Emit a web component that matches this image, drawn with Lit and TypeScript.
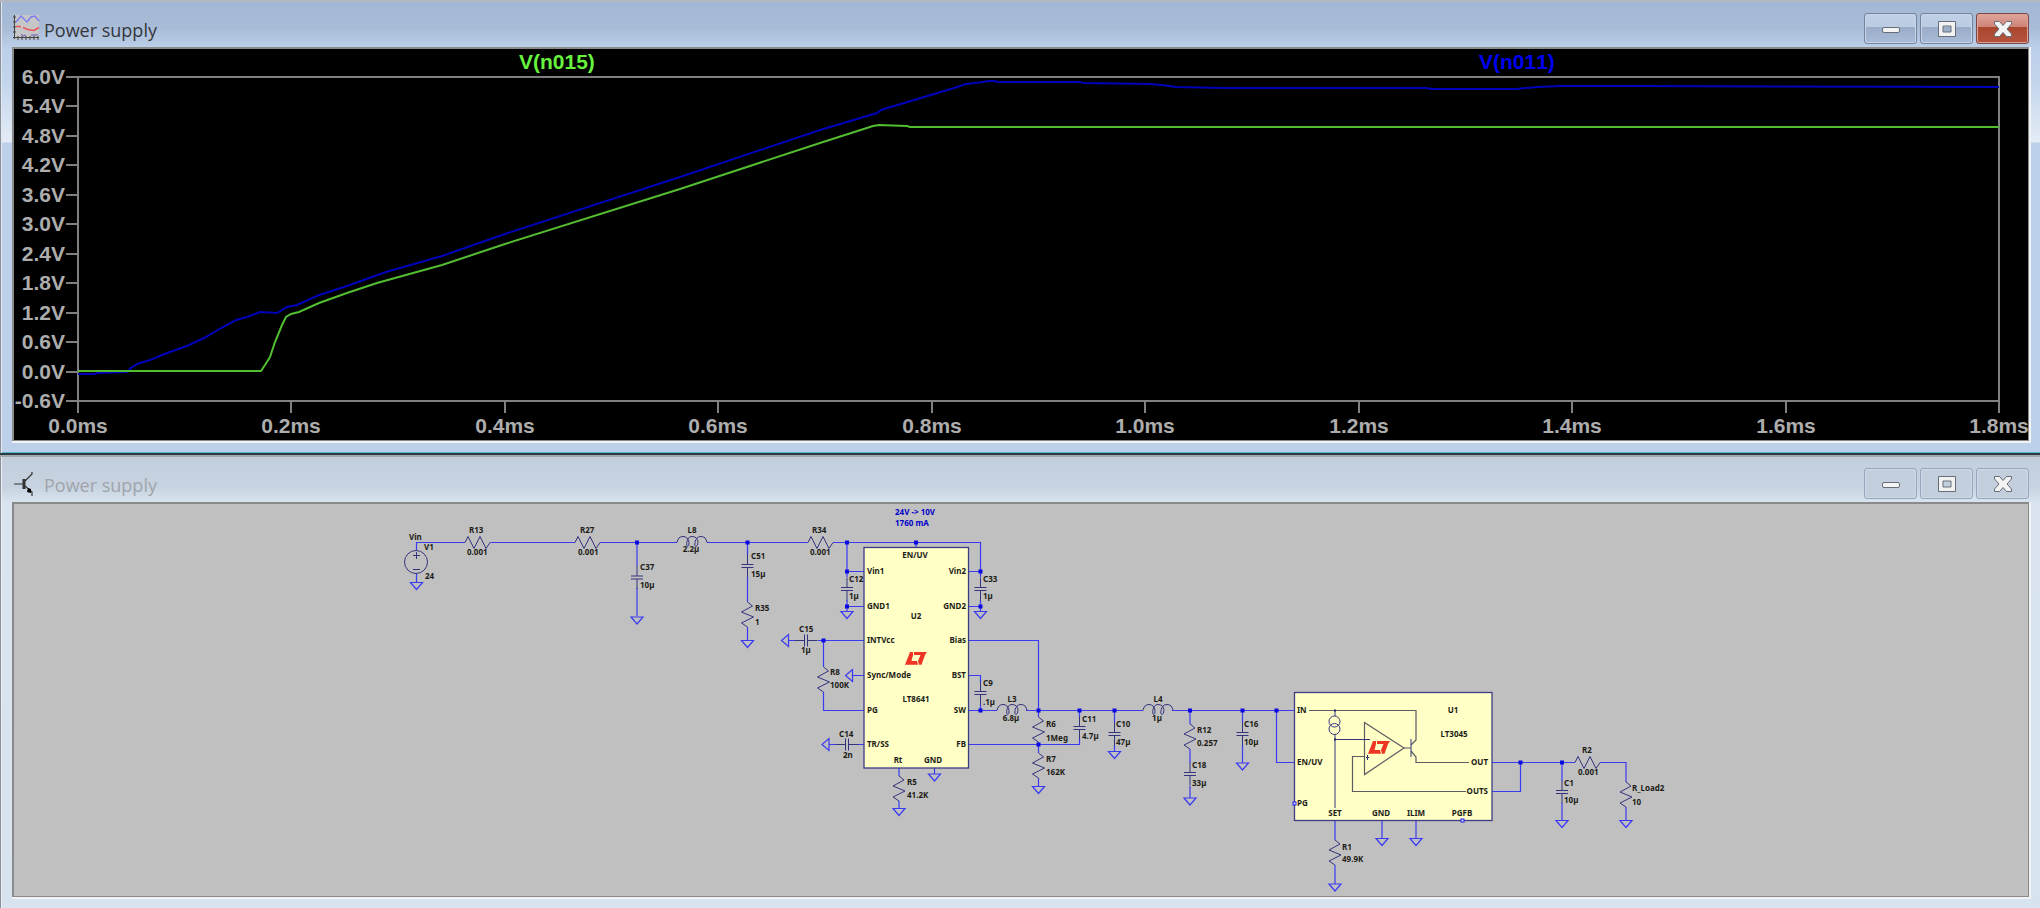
import { LitElement, html, svg, css } from "lit";
import { customElement, property } from "lit/decorators.js";

type Point = [number, number];

/* ---------- Window frame with caption buttons ---------- */

@customElement("tool-window")
export class ToolWindow extends LitElement {
  @property() caption = "";
  @property() icon = "plot";
  @property({ type: Boolean, reflect: true }) active = false;

  static styles = css`
    :host {
      display: flex;
      flex-direction: column;
      box-sizing: border-box;
      padding: 0 9px 10px 12px;
      border-top: 2px solid #a5a8ac;
      background: linear-gradient(#c3cedc 0, #c7d3e0 30px, #d9e4f0 46px, #d8e3f0 100%);
      box-shadow: inset 1px 0 #8b9097, inset 2px 0 #e9eff6;
    }
    :host([active]) {
      border-top-color: #b4b9bf;
      border-bottom: 2px solid #2a3c40;
      background: linear-gradient(#a3b8d4 0, #a8bcd8 26px, #bccfe9 45px, #c3d5ec 80px, #e4ecf6 140px, #bdd0e9 141px, #bdd0e9 100%);
      box-shadow: inset 1px 0 #8b9097, inset 2px 0 #dfe9f5, inset 0 -1px #4fb4cc;
    }
    .bar {
      display: flex;
      align-items: flex-start;
      height: 45px;
      padding-right: 2px;
    }
    .icon {
      display: block;
      margin-top: 12px;
      width: 28px;
      height: 28px;
      flex: none;
    }
    .caption {
      flex: 1;
      margin: 0;
      padding: 14px 0 0 4px;
      font: 400 18px/28px "Open Sans", "Noto Sans", sans-serif;
      color: #a0a4aa;
    }
    :host([active]) .caption {
      color: #35373b;
    }
    .buttons {
      display: flex;
      gap: 3px;
      padding-top: 11px;
    }
    button {
      display: grid;
      place-items: center;
      width: 53px;
      height: 31px;
      padding: 0;
      border: 1px solid #97a6be;
      border-radius: 3px;
      background: #c4cfde;
      box-shadow: inset 0 0 0 1px #cfd9e6;
    }
    :host([active]) button {
      border-color: #76849c;
      background: linear-gradient(#c0d0e6, #bccce2 44%, #9aacc7 45%, #a9bcd8);
      box-shadow: inset 0 0 0 1px #c6d5e9;
    }
    :host([active]) .close {
      border-color: #7d4846;
      background: linear-gradient(#dfa59c, #cf8477 44%, #aa4630 45%, #b4533c);
      box-shadow: inset 0 0 0 1px #dba398;
    }
    .frame {
      border: solid #f1f2f3;
      border-width: 0 2px 2px 0;
    }
    .client {
      border: solid #8a8a8a;
      border-width: 2px 1px 1px 2px;
    }
  `;

  private renderIcon() {
    return this.icon === "plot"
      ? html`<svg class="icon" viewBox="0 0 28 28" aria-hidden="true">
          <rect x="3" y="1" width="24" height="24" fill="#c6c6c9" />
          <path d="M2.500 1v24M1 3h3M1 8h3M1 13h3M1 18h3M1 23.500h26M6 22v4M10 22v4M14 22v4M18 22v4M22 22v4M26 22v4" stroke="#444" fill="none" />
          <path d="M4 8l5-6 6 6 4-5 4-1 4 5" stroke="#7d7df0" fill="none" stroke-width="1.500" />
          <path d="M4 12.500h5M11 13.500l5 2 6 1 5-3" stroke="#ef5353" fill="none" stroke-width="1.500" />
          <path d="M9 20l2 2 3-1M19 21h7" stroke="#5a5ab4" fill="none" />
        </svg>`
      : html`<svg class="icon" viewBox="0 0 28 28" aria-hidden="true">
          <path d="M2 15h9M13 12l4-4 3-3V3M13 17l7 6v4" stroke="#333" fill="none" stroke-width="1.200" />
          <path d="M12 10v10" stroke="#333" stroke-width="3" />
          <path d="M15 23l4 1v-4l-3-1z" fill="#000" />
        </svg>`;
  }

  render() {
    return html`
      <header class="bar">
        ${this.renderIcon()}
        <h2 class="caption">${this.caption}</h2>
        <div class="buttons">
          <button aria-label="Minimize">
            <svg width="20" height="18" viewBox="0 0 20 18"><rect x="1.500" y="7.500" width="17" height="5" rx="1.500" fill="#f4f4f4" stroke="#666d78" /></svg>
          </button>
          <button aria-label="Maximize">
            <svg width="20" height="18" viewBox="0 0 20 18">
              <path d="M1.500 1.500h17v15h-17zM6 6v6h8V6z" fill="#f2f2f2" stroke="#666d78" fill-rule="evenodd" />
            </svg>
          </button>
          <button class="close" aria-label="Close">
            <svg width="20" height="18" viewBox="0 0 20 18">
              <path d="M1.500 4V1.500H6.500L10 5.500 13.500 1.500H18.500V4L14 9 18.500 14V16.500H13.500L10 12.500 6.500 16.500H1.500V14L6 9z" fill="#f4f4f4" stroke="#666d78" stroke-linejoin="round" />
            </svg>
          </button>
        </div>
      </header>
      <div class="frame"><div class="client"><slot></slot></div></div>
    `;
  }
}

/* ---------- Waveform plot ---------- */

const VOLTS = ["6.0V", "5.4V", "4.8V", "4.2V", "3.6V", "3.0V", "2.4V", "1.8V", "1.2V", "0.6V", "0.0V", "-0.6V"];
const TIMES = ["0.0ms", "0.2ms", "0.4ms", "0.6ms", "0.8ms", "1.0ms", "1.2ms", "1.4ms", "1.6ms", "1.8ms"];

const N011: Point[] = [
  [78, 374], [95, 374], [97, 373], [127, 372], [131, 368], [137, 364], [150, 360], [167, 353], [187, 346],
  [206, 337], [221, 328], [236, 320], [247, 317], [260, 312], [277, 313], [287, 307], [297, 305], [319, 295],
  [347, 286], [386, 272], [442, 256], [505, 234], [680, 177], [820, 130], [877, 113], [881, 110], [954, 88],
  [966, 84], [983, 82], [988, 81], [995, 81], [997, 82], [1080, 82], [1083, 83], [1150, 84], [1162, 85],
  [1176, 87], [1226, 88], [1426, 88], [1432, 89], [1516, 89], [1537, 87], [1560, 86], [1640, 86], [1999, 87],
];
const N015: Point[] = [
  [78, 371], [261, 371], [265, 365], [270, 357], [275, 342], [282, 325], [286, 317], [291, 314], [299, 312],
  [319, 303], [347, 293], [377, 283], [442, 265], [505, 244], [680, 189], [820, 143], [873, 126], [879, 125],
  [907, 126], [910, 127], [1999, 127],
];
const line = (pts: Point[]) => pts.map((p) => p.join(",")).join(" ");

@customElement("wave-plot")
export class WavePlot extends LitElement {
  static styles = css`
    :host { display: block; background: #000; }
    svg { display: block; width: 100%; height: auto; }
    text { font: 700 21px "Liberation Sans", Arial, sans-serif; font-kerning: none; fill: #adadad; }
    .volt { text-anchor: end; }
    .time { text-anchor: middle; }
    .axis { stroke: #808080; stroke-width: 2; fill: none; }
    .green { stroke: #52bd31; }
    .blue { stroke: #0000b8; }
    .trace { fill: none; stroke-width: 2; }
    .label-green { fill: #66f23d; }
    .label-blue { fill: #0000f0; }
  `;

  render() {
    const left = 78, right = 1999, top = 77, bottom = 401;
    const dy = (bottom - top) / (VOLTS.length - 1);
    const dx = (right - left) / (TIMES.length - 1);
    return html`<svg viewBox="14 49 2014 391" role="img" aria-label="Voltage against time">
      <text class="label-green" x="519" y="69">V(n015)</text>
      <text class="label-blue" x="1479" y="69">V(n011)</text>
      <rect class="axis" x=${left} y=${top} width=${right - left} height=${bottom - top} />
      ${VOLTS.map((v, i) => svg`
        <path class="axis" d="M66 ${Math.round(top + i * dy)}H${left}" />
        <text class="volt" x="65" y=${Math.round(top + i * dy) + 7}>${v}</text>`)}
      ${TIMES.map((t, i) => svg`
        <path class="axis" d="M${Math.round(left + i * dx)} ${bottom}v12" />
        <text class="time" x=${Math.round(left + i * dx)} y="433">${t}</text>`)}
      <polyline class="trace blue" points=${line(N011)} />
      <polyline class="trace green" points=${line(N015)} />
    </svg>`;
  }
}

/* ---------- Schematic ---------- */

const resistorH = (x: number, y: number) =>
  svg`<path class="part" d="M${x} ${y}l3 -6l6 12l6 -12l6 12l4 -6" />`;
const resistorV = (x: number, y: number) =>
  svg`<path class="part" d="M${x} ${y}l5 4l-11 6l12 5l-12 6l6 4" />`;
const capV = (x: number, y: number) =>
  svg`<path class="part" d="M${x - 6} ${y}h12M${x - 6} ${y + 3}h12M${x} ${y - 10}v10M${x} ${y + 3}v10" />`;
const capH = (x: number, y: number) =>
  svg`<path class="part" d="M${x} ${y - 6}v12M${x + 3} ${y - 6}v12M${x - 10} ${y}h10M${x + 3} ${y}h10" />`;
const coil = (x: number, y: number) =>
  svg`<path class="part" d="M${x} ${y}q1 -6 6 -6q5 0 6 6q0 4 -1 4q-2 0 -1 -5q1 -5 5 -5q5 0 6 5q0 5 -2 5q-2 0 -1 -4q1 -6 6 -6q5 0 6 6" />`;
const ground = (x: number, y: number) => svg`<path class="wire" d="M${x - 6} ${y}h12l-6 7z" />`;
const groundLeft = (x: number, y: number) => svg`<path class="wire" d="M${x} ${y - 6}v12l-7 -6z" />`;
const node = (x: number, y: number) => svg`<rect class="node" x=${x - 2} y=${y - 2} width="4" height="4" />`;
const logo = (x: number, y: number) => svg`<g transform="translate(${x} ${y})">
  <path fill="#ee3524" d="M5 0H8L8 3L6.500 9H12L13 12.700H0zM9 0H22L20 3L16.500 12.700H14L13 9L15.500 3H9z" /></g>`;

/* [text, x, baseline, anchor] */
type Label = [string, number, number, string?];
const LABELS: Label[] = [
  ["Vin", 409, 540], ["V1", 424, 550], ["24", 425, 579],
  ["R13", 469, 533], ["0.001", 467, 555], ["R27", 580, 533], ["0.001", 578, 555],
  ["C37", 640, 570], ["10µ", 640, 588], ["L8", 692, 533, "mid"], ["2.2µ", 691, 552, "mid"],
  ["C51", 751, 559], ["15µ", 751, 577], ["R35", 755, 611], ["1", 755, 625],
  ["R34", 812, 533], ["0.001", 810, 555],
  ["C12", 849, 582], ["1µ", 849, 599], ["C33", 983, 582], ["1µ", 983, 599],
  ["C15", 799, 632], ["1µ", 801, 653], ["R8", 830, 675], ["100K", 830, 688],
  ["C14", 839, 737], ["2n", 843, 758], ["R5", 907, 785], ["41.2K", 907, 798],
  ["C9", 983, 686], [".1µ", 983, 705], ["L3", 1012, 702, "mid"], ["6.8µ", 1011, 721, "mid"],
  ["R6", 1046, 727], ["1Meg", 1046, 741], ["R7", 1046, 762], ["162K", 1046, 775],
  ["C11", 1082, 722], ["4.7µ", 1082, 739], ["C10", 1116, 727], ["47µ", 1116, 745],
  ["L4", 1158, 702, "mid"], ["1µ", 1157, 721, "mid"], ["R12", 1197, 733], ["0.257", 1197, 746],
  ["C18", 1192, 768], ["33µ", 1192, 786], ["C16", 1244, 727], ["10µ", 1244, 745],
  ["EN/UV", 915, 558, "mid"], ["Vin1", 867, 574], ["Vin2", 966, 574, "end"],
  ["GND1", 867, 609], ["GND2", 966, 609, "end"], ["U2", 916, 619, "mid"],
  ["INTVcc", 867, 643], ["Bias", 966, 643, "end"], ["Sync/Mode", 867, 678], ["BST", 966, 678, "end"],
  ["LT8641", 916, 702, "mid"], ["PG", 867, 713], ["SW", 966, 713, "end"],
  ["TR/SS", 867, 747], ["FB", 966, 747, "end"], ["Rt", 898, 763, "mid"], ["GND", 933, 763, "mid"],
  ["IN", 1297, 713], ["EN/UV", 1297, 765], ["PG", 1297, 806], ["U1", 1453, 713, "mid"],
  ["LT3045", 1454, 737, "mid"], ["OUT", 1488, 765, "end"], ["OUTS", 1488, 794, "end"],
  ["SET", 1335, 816, "mid"], ["GND", 1381, 816, "mid"], ["ILIM", 1416, 816, "mid"], ["PGFB", 1462, 816, "mid"],
  ["R1", 1342, 850], ["49.9K", 1342, 862], ["R2", 1582, 753], ["0.001", 1578, 775],
  ["C1", 1564, 786], ["10µ", 1564, 803], ["R_Load2", 1632, 791], ["10", 1632, 805],
];

const WIRES = [
  "M416.5 550.5V542.5H465M490 542.5H575M600 542.5H677M707 542.5H808M833 542.5H980.5V571",
  "M416.5 573V582M637 542.5V566M637 588V616M747.5 542.5V555M747.5 577V602M747.5 627V640",
  "M847 542.5V577M847 600V611M847 571.5H864M847 606.5H864M916 542.5V548M980.5 571V577M980.5 600V611M968 571.5H980M968 606.5H980",
  "M788 640.5H796M818 640.5H864M823.5 640.5V667M823.5 692V710.5H864M853 675.5H864M829 744.5H838M857 744.5H864",
  "M899 768V776M899 801V808M934.5 768V774M968 640.5H1038.5V717M968 675.5H980.5V682M980.5 704V710.5",
  "M968 710.5H997M1026 710.5H1143M1172 710.5H1295M968 744.5H1079.5V738M1079.5 710.5V718M1038.5 742V753M1038.5 778V786",
  "M1114.5 710.5V723M1114.5 745V751M1190 710.5V724M1190 749V763M1190 786V798M1242.500 710.5V723M1242.500 745V763",
  "M1276.5 710.5V762.5H1295M1335 820V840M1335 865V884M1382 820V838M1416 820V838",
  "M1492 762.5H1575M1600 762.5H1626V782M1626 807V820M1492 791.5H1520.5V762.5M1562 762.5V781M1562 803V820",
];

@customElement("circuit-sheet")
export class CircuitSheet extends LitElement {
  static styles = css`
    :host { display: block; background: #c0c0c0; }
    svg { display: block; width: 100%; height: auto; }
    text { font: 700 8px "Noto Sans", "Open Sans", sans-serif; fill: #1c1c16; }
    .mid { text-anchor: middle; }
    .end { text-anchor: end; }
    .note { fill: #0000c8; }
    .wire { fill: none; stroke: #3a3af2; stroke-width: 1.2; }
    .part { fill: none; stroke: #34347e; stroke-width: 1; }
    .inner { fill: none; stroke: #5c5c62; stroke-width: 1.2; }
    .chip { fill: #ffffc6; stroke: #3c3c86; stroke-width: 1.3; }
    .node { fill: #0a0ae0; }
    .port { fill: #dcdcf0; stroke: #1c1cf0; stroke-width: 1; }
  `;

  render() {
    return html`<svg viewBox="14 504 2014 392" role="img" aria-label="Power supply schematic">
      ${WIRES.map((d) => svg`<path class="wire" d=${d} />`)}

      <circle class="part" cx="416" cy="562" r="11.500" />
      <path class="part" d="M413 555.500h7M416.500 552v7M413 569.500h7" />

      ${[[465, 542.5], [575, 542.5], [808, 542.5], [1575, 762.5]].map(([x, y]) => resistorH(x, y))}
      ${[[747.5, 602], [823.5, 667], [899, 776], [1038.5, 717], [1038.5, 753], [1190, 724], [1335, 840], [1626, 782]].map(([x, y]) => resistorV(x, y))}
      ${[[637, 576], [747.5, 564.5], [847, 587.5], [980.5, 587.5], [980.5, 691.5], [1079.5, 726.5], [1114.5, 732.5], [1190, 772.5], [1242.5, 732.5], [1562, 790.5]].map(([x, y]) => capV(x, y))}
      ${[[804.5, 640.5], [845.5, 744.5]].map(([x, y]) => capH(x, y))}
      ${[[677, 542.5], [997, 710.5], [1143, 710.5]].map(([x, y]) => coil(x, y))}
      ${[[416.5, 582.5], [637, 617], [747.5, 640.5], [847, 611.5], [980.5, 611.5], [899, 808.5], [934.5, 774], [1038.5, 786.5], [1114.5, 751.5], [1190, 798], [1242.5, 763], [1335, 884], [1382, 838.5], [1416, 838.5], [1562, 820.5], [1626, 820.5]].map(([x, y]) => ground(x, y))}
      ${[[788.5, 640.5], [852.5, 675.5], [829, 744.5]].map(([x, y]) => groundLeft(x, y))}
      ${[[637, 542.5], [747.5, 542.5], [847, 542.5], [916, 542.5], [847, 571.5], [847, 606.5], [980.5, 571.5], [980.5, 606.5], [823.5, 640.5], [980.5, 710.5], [1038.5, 710.5], [1038.5, 744.5], [1079.5, 710.5], [1114.5, 710.5], [1190, 710.5], [1242.5, 710.5], [1276.5, 710.5], [1520.5, 762.5], [1562, 762.5]].map(([x, y]) => node(x, y))}

      <rect class="chip" x="864" y="547.500" width="104.500" height="220.500" />
      ${logo(905, 652)}

      <rect class="chip" x="1294.500" y="692.500" width="197.500" height="128" />
      <path class="inner" d="M1309 710.500H1416V740L1411 745M1411 751L1416 757V762.500H1469M1364 756.500H1352.500V791.500H1466M1404 748H1411" />
      <path class="inner" d="M1364.500 722.500L1404 748L1364.500 774.500z" />
      <path class="part" d="M1335 710V716M1335 734V808M1335 739.500H1370M1366 757.500h3M1367.500 755v5" />
      <path class="part" stroke-width="2" d="M1411 739V757" />
      <circle class="part" cx="1334.500" cy="721.500" r="5.500" />
      <circle class="part" cx="1334.500" cy="729" r="5.500" />
      <rect x="1334" y="709.500" width="2" height="2" fill="#222266" />
      <rect x="1334" y="738.500" width="2" height="2" fill="#222266" />
      <rect class="port" x="1293" y="802" width="3" height="3" />
      <rect class="port" x="1461" y="819" width="3" height="3" />
      ${logo(1368, 741)}

      <text class="note" x="895" y="515">24V -&gt; 10V</text>
      <text class="note" x="895" y="526">1760 mA</text>
      ${LABELS.map(([t, x, y, anchor]) => svg`<text class=${anchor ?? "start"} x=${x} y=${y}>${t}</text>`)}
    </svg>`;
  }
}

/* ---------- Page ---------- */

@customElement("app-root")
export class AppRoot extends LitElement {
  static styles = css`
    :host {
      display: flex;
      flex-direction: column;
      min-height: 100vh;
      background: #d8e3f0;
    }
  `;

  render() {
    return html`
      <tool-window active caption="Power supply" icon="plot"><wave-plot></wave-plot></tool-window>
      <tool-window caption="Power supply" icon="transistor"><circuit-sheet></circuit-sheet></tool-window>
    `;
  }
}
